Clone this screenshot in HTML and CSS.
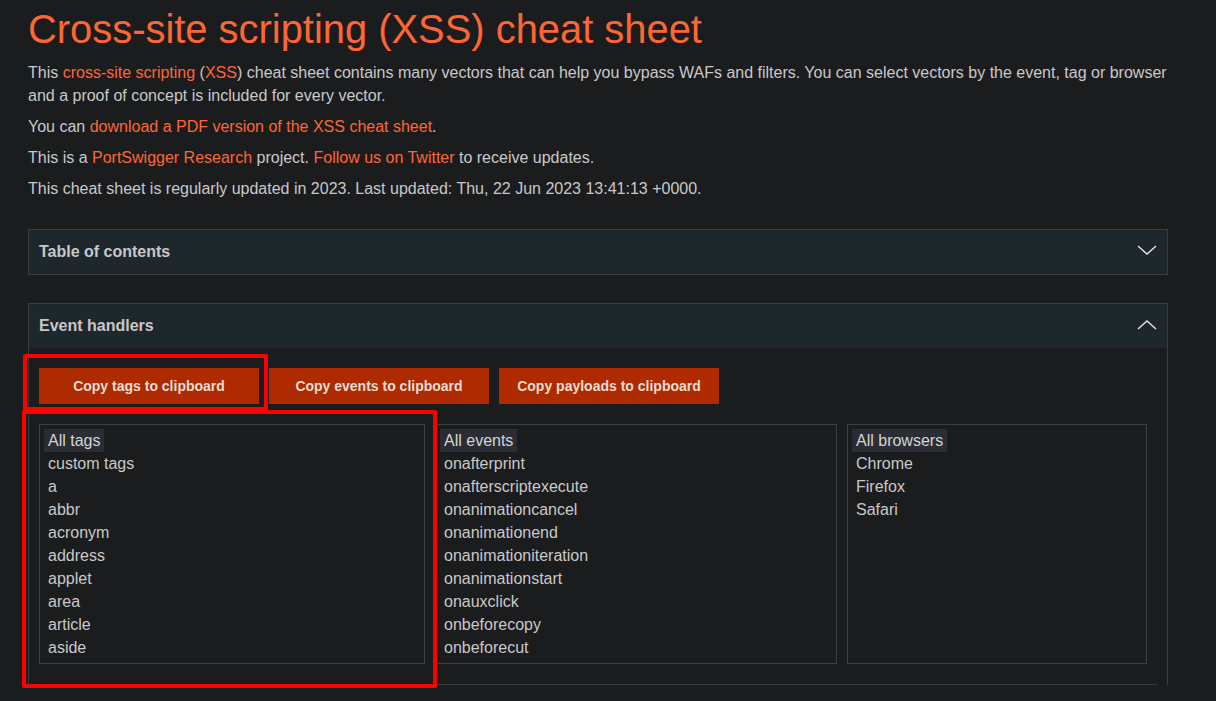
FILE: index.html
```html
<!DOCTYPE html>
<html>
<head>
<meta charset="utf-8">
<title>Cross-site scripting (XSS) cheat sheet</title>
<link rel="stylesheet" href="styles.css">
</head>
<body>
<div class="page">
  <h1 class="title">Cross-site scripting (XSS) cheat sheet</h1>
  <p class="para">This <a class="link" href="#">cross-site scripting</a> (<a class="link" href="#">XSS</a>) cheat sheet contains many vectors that can help you bypass WAFs and filters. You can select vectors by the event, tag or browser and a proof of concept is included for every vector.</p>
  <p class="para">You can <a class="link" href="#">download a PDF version of the XSS cheat sheet</a>.</p>
  <p class="para">This is a <a class="link" href="#">PortSwigger Research</a> project. <a class="link" href="#">Follow us on Twitter</a> to receive updates.</p>
  <p class="para last">This cheat sheet is regularly updated in 2023. Last updated: Thu, 22 Jun 2023 13:41:13 +0000.</p>

  <section class="panel toc">
    <div class="panel-head">
      <span class="panel-title">Table of contents</span>
      <svg class="chev" width="20" height="10" viewBox="0 0 20 10"><polyline points="1,1 10,9 19,1" fill="none" stroke="#e6e6e6" stroke-width="1.4"/></svg>
    </div>
  </section>

  <section class="panel events">
    <div class="panel-head">
      <span class="panel-title">Event handlers</span>
      <svg class="chev" width="20" height="10" viewBox="0 0 20 10"><polyline points="1,9 10,1 19,9" fill="none" stroke="#e6e6e6" stroke-width="1.4"/></svg>
    </div>
    <div class="panel-body">
      <div class="buttons">
        <button class="btn">Copy tags to clipboard</button>
        <button class="btn">Copy events to clipboard</button>
        <button class="btn">Copy payloads to clipboard</button>
      </div>
      <div class="selects">
        <div class="list list-tags">
          <div class="item sel">All tags</div>
          <div class="item">custom tags</div>
          <div class="item">a</div>
          <div class="item">abbr</div>
          <div class="item">acronym</div>
          <div class="item">address</div>
          <div class="item">applet</div>
          <div class="item">area</div>
          <div class="item">article</div>
          <div class="item">aside</div>
        </div>
        <div class="list list-events">
          <div class="item sel">All events</div>
          <div class="item">onafterprint</div>
          <div class="item">onafterscriptexecute</div>
          <div class="item">onanimationcancel</div>
          <div class="item">onanimationend</div>
          <div class="item">onanimationiteration</div>
          <div class="item">onanimationstart</div>
          <div class="item">onauxclick</div>
          <div class="item">onbeforecopy</div>
          <div class="item">onbeforecut</div>
        </div>
        <div class="list list-browsers">
          <div class="item sel">All browsers</div>
          <div class="item">Chrome</div>
          <div class="item">Firefox</div>
          <div class="item">Safari</div>
        </div>
      </div>
      <hr class="rule">
    </div>
  </section>
</div>
<div class="mark mark-btn"></div>
<div class="mark mark-list"></div>
</body>
</html>
```
FILE: styles.css
```css
html, body {
  margin: 0;
  padding: 0;
  background: #1b1c1e;
  height: 100%;
  overflow: hidden;
}
body {
  font-family: "Liberation Sans", Arial, sans-serif;
  color: #c9c9c9;
  font-size: 16px;
  position: relative;
}
.page {
  padding: 0 48px 0 28px;
}
.title {
  margin: 6px 0 9px;
  font-size: 39.9px;
  line-height: 46px;
  font-weight: normal;
  color: #ff6633;
}
.para {
  margin: 0 0 8px;
  line-height: 23px;
}
.para.last {
  margin-bottom: 29px;
}
.link {
  color: #ff6633;
  text-decoration: none;
}
.panel {
  border: 1px solid #3a3e41;
  background: #1b1c1e;
}
.toc {
  margin-bottom: 28px;
}
.events {
  border-bottom: none;
}
.panel-head {
  height: 44px;
  background: #1e272c;
  display: flex;
  align-items: center;
  justify-content: space-between;
  padding: 0 10px;
}
.panel-title {
  font-weight: bold;
  color: #c8c8c8;
}
.chev {
  display: block;
}
.toc .chev {
  margin-top: -4px;
}
.events .chev {
  margin-top: -2px;
}
.panel-body {
  padding: 20px 10px 0;
}
.buttons {
  display: flex;
  gap: 10px;
}
.btn {
  width: 220px;
  height: 36px;
  border: none;
  background: #ae2a00;
  color: #ecdcd2;
  font-family: "Liberation Sans", Arial, sans-serif;
  font-weight: bold;
  font-size: 14px;
  padding: 0;
}
.selects {
  display: flex;
  gap: 10px;
  margin-top: 20px;
}
.list {
  height: 234px;
  border: 1px solid #3d4043;
  padding: 4px 4px 0;
  overflow: hidden;
  box-sizing: content-box;
}
.list-tags { width: 376px; }
.list-events { width: 392px; }
.list-browsers { width: 290px; }
.item {
  line-height: 23px;
  height: 23px;
  padding: 0 4px;
  color: #c9c9c9;
  width: max-content;
}
.item.sel {
  background: #2b2d34;
  color: #d4d4d4;
}
.rule {
  margin: 20px 0 0;
  border: none;
  border-top: 1px solid #3a3d40;
  height: 0;
}
.mark {
  position: absolute;
  border: 4px solid #ff0000;
  border-radius: 2px;
  box-sizing: border-box;
  pointer-events: none;
}
.mark-btn {
  left: 23px;
  top: 354px;
  width: 245px;
  height: 57px;
}
.mark-list {
  left: 22px;
  top: 410px;
  width: 415px;
  height: 278px;
}
```
